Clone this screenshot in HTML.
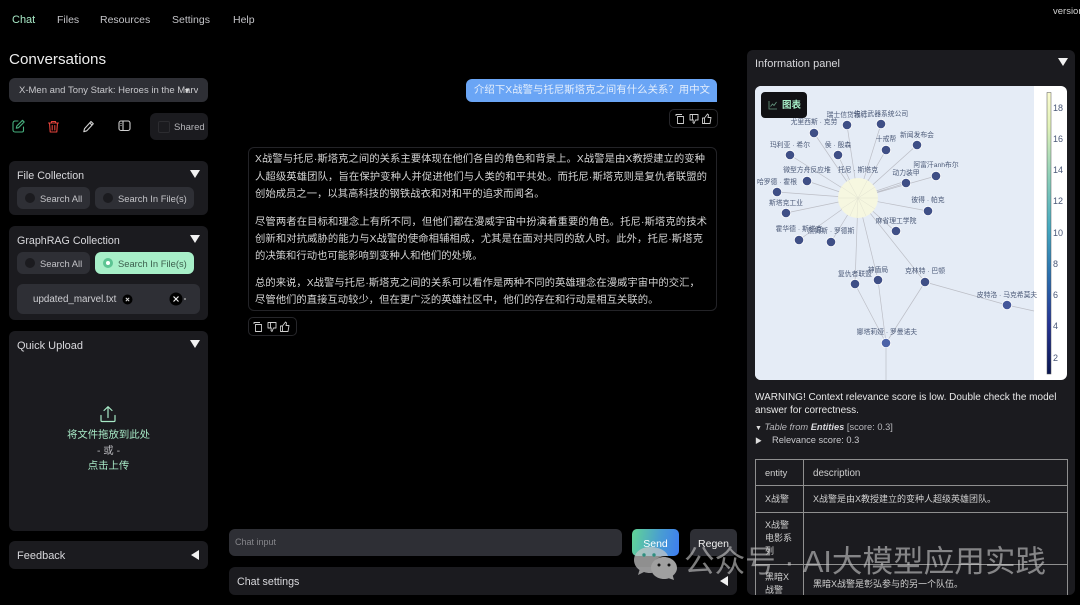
<!DOCTYPE html>
<html lang="zh"><head><meta charset="utf-8"><title>Chat</title>
<style>
html,body{margin:0;padding:0;background:#000;width:1080px;height:605px;overflow:hidden}
body{position:relative;font-family:"Liberation Sans","Noto Sans CJK SC",sans-serif;color:#d4d4d8;font-size:10.5px}
.a{position:absolute;white-space:nowrap}
.p{position:absolute;background:#1b1b1f;border-radius:6px}
.tab{position:absolute;top:13px;font-size:10.5px;line-height:14px;color:#c4c4c8}
.h{position:absolute;margin-top:1px;font-size:10.7px;line-height:14px;color:#d8d8dc;white-space:nowrap}
.tri{position:absolute;width:0;height:0;border-left:5px solid transparent;border-right:5px solid transparent;border-top:8px solid #f2f2f2}
.triL{position:absolute;width:0;height:0;border-top:5px solid transparent;border-bottom:5px solid transparent;border-right:8px solid #f2f2f2}
.radio{position:absolute;height:22px;background:#2e2f35;border-radius:6px;font-size:9.4px;line-height:22px;color:#c4c4c8;white-space:nowrap}
.radio i{position:absolute;left:8px;top:6px;width:10px;height:10px;border-radius:50%;background:#1b1b1f}
.radio span{position:absolute;left:23px;top:1px}
.l{position:absolute;left:255px;margin-top:2px;height:16px;line-height:16px;font-size:10.35px;color:#d4d4d4;text-align:justify;text-align-last:justify;white-space:nowrap}
.act{position:absolute;width:47px;height:17px;border:1px solid #26262a;border-radius:5px}
.act svg{position:absolute;left:0;top:0}
.t{position:absolute;color:#d0d0d0;font-size:9.3px;line-height:13px}
.hl{position:absolute;background:#8f8f8f;height:1px;left:755px;width:312px}
.wm{position:absolute;left:684px;top:545px;font-size:30.6px;line-height:34px;color:rgba(205,205,205,.6);white-space:nowrap}
</style></head><body>

<div class="tab" style="left:12px;color:#a7e9c6;font-size:11px">Chat</div>
<div class="tab" style="left:57px">Files</div>
<div class="tab" style="left:100px">Resources</div>
<div class="tab" style="left:172px">Settings</div>
<div class="tab" style="left:233px">Help</div>
<div class="a" style="left:1053px;top:5px;font-size:9.5px;line-height:13px;color:#d0d0d0">version</div>

<div class="a" style="left:9px;top:51px;font-size:15.2px;line-height:18px;color:#ececec">Conversations</div>
<div class="p" style="left:9px;top:78px;width:199px;height:24px;background:#2e2f35"></div>
<div class="a" style="left:19px;top:84px;width:179px;overflow:hidden;font-size:9.5px;line-height:13px;color:#c8c8cc">X-Men and Tony Stark: Heroes in the Marv</div>
<div class="a" style="left:185px;top:89px;width:0;height:0;border-left:2.5px solid transparent;border-right:2.5px solid transparent;border-top:4px solid #ddd"></div>

<svg class="a" style="left:12px;top:119px" width="13" height="14" viewBox="0 0 13 14" fill="none" stroke="#46b07e" stroke-width="1.1" stroke-linecap="round" stroke-linejoin="round"><path d="M6 2H3a2 2 0 0 0-2 2v7a2 2 0 0 0 2 2h7a1.500 1.500 0 0 0 1.500-1.500V8"/><path d="M10.500 1.300l1.700 1.700-5.700 5.700-2.200.5.500-2.200z"/></svg>
<svg class="a" style="left:47px;top:120px" width="13" height="13" viewBox="0 0 12 13" fill="none" stroke="#e5433c" stroke-width="1.1" stroke-linecap="round" stroke-linejoin="round"><path d="M1 3h10M4 3V1.500h4V3M2 3l.7 9h6.600L10 3M4.700 5.500v4.500M7.300 5.500v4.500"/></svg>
<svg class="a" style="left:82px;top:120px" width="13" height="13" viewBox="0 0 12 13" fill="none" stroke="#d0d0d0" stroke-width="1.100" stroke-linejoin="round"><path d="M8.500 1.500l2.300 2.300-6.500 7L1.300 11.700l.7-3z"/><path d="M7.300 2.900l2.300 2.300"/></svg>
<svg class="a" style="left:118px;top:120px" width="13" height="12" viewBox="0 0 13 12" fill="none" stroke="#d0d0d0" stroke-width="1.100"><rect x="1" y="1" width="11" height="9.500" rx="2"/><path d="M5 1v9.500M2.500 3.500h1M2.500 5.500h1"/></svg>
<div class="p" style="left:150px;top:113px;width:58px;height:27px"></div>
<div class="a" style="left:158px;top:121px;width:10px;height:10px;border:1px solid #2c2c30;border-radius:2px"></div>
<div class="a" style="left:174px;top:121px;font-size:9.5px;line-height:13px;color:#b4b4b8">Shared</div>

<div class="p" style="left:9px;top:161px;width:199px;height:54px"></div>
<div class="h" style="left:17px;top:168px">File Collection</div>
<div class="tri" style="left:190px;top:170px"></div>
<div class="radio" style="left:17px;top:187px;width:73px"><i></i><span>Search All</span></div>
<div class="radio" style="left:95px;top:187px;width:99px"><i></i><span>Search In File(s)</span></div>

<div class="p" style="left:9px;top:226px;width:199px;height:94px"></div>
<div class="h" style="left:17px;top:233px">GraphRAG Collection</div>
<div class="tri" style="left:190px;top:235px"></div>
<div class="radio" style="left:17px;top:252px;width:73px"><i></i><span>Search All</span></div>
<div class="radio" style="left:95px;top:252px;width:99px;background:#a7efc8;color:#3c5e4d"><i style="background:#fff;border:3px solid #5cc493;width:4px;height:4px"></i><span>Search In File(s)</span></div>
<div class="p" style="left:17px;top:284px;width:183px;height:30px;background:#2e2f35"></div>
<div class="a" style="left:33px;top:293px;font-size:9.8px;line-height:13px;color:#d0d0d4">updated_marvel.txt</div>
<svg class="a" style="left:122px;top:294px" width="11" height="11" viewBox="0 0 11 11"><circle cx="5.500" cy="5.500" r="5" fill="#000"/><path d="M3.800 3.800l3.400 3.400M7.200 3.800l-3.400 3.400" stroke="#ddd" stroke-width="1"/></svg>
<svg class="a" style="left:169px;top:292px" width="14" height="14" viewBox="0 0 14 14"><circle cx="7" cy="7" r="6.500" fill="#000"/><path d="M4.500 4.500l5 5M9.500 4.500l-5 5" stroke="#eee" stroke-width="1.200"/></svg>
<div class="a" style="left:184px;top:298px;width:2px;height:2px;background:#999;border-radius:50%"></div>

<div class="p" style="left:9px;top:331px;width:199px;height:200px"></div>
<div class="h" style="left:17px;top:338px;font-size:11px">Quick Upload</div>
<div class="tri" style="left:190px;top:340px"></div>
<svg class="a" style="left:99px;top:405px" width="18" height="18" viewBox="0 0 18 18" fill="none" stroke="#a7e9c6" stroke-width="1.200" stroke-linecap="round" stroke-linejoin="round"><path d="M9 12.500V2M5 5.500L9 1.700l4 3.800M2 10.500v5a1 1 0 0 0 1 1h12a1 1 0 0 0 1-1v-5"/></svg>
<div class="a" style="left:9px;top:428px;width:199px;text-align:center;font-size:10.4px;line-height:15.500px;color:#a7e9c6">将文件拖放到此处<br><span style="color:#b8b8bc">- 或 -</span><br>点击上传</div>

<div class="p" style="left:9px;top:541px;width:199px;height:28px"></div>
<div class="h" style="left:17px;top:548px;font-size:11px">Feedback</div>
<div class="triL" style="left:191px;top:550px"></div>

<!-- chat -->
<div class="a" style="left:466px;top:79px;width:251px;height:23px;background:#6aa5f5;border-radius:6px 6px 0 6px"></div>
<div class="l" style="left:474px;top:81px;width:236px;color:#e4eefc">介绍下X战警与托尼斯塔克之间有什么关系？用中文</div>
<div class="act" style="left:669px;top:109px"><svg width="47" height="17" viewBox="0 0 47 17" fill="none" stroke="#cfcfcf" stroke-width=".9" stroke-linejoin="round"><path d="M6 6V4.500h6M7.500 6.500h6v7h-6z"/><path d="M20 4.500h8v5.500h-2.500l-1.500 3.500-1-1 .3-2.500H20zM22.500 4.500v5"/><path d="M34.500 8v5.500h-2V8zM34.500 8l3-4 1 1-.5 2.500h3l-1 6h-5.500"/></svg></div>
<div class="a" style="left:248px;top:147px;width:467px;height:162px;border:1px solid #232327;border-radius:6px"></div>
<div class="l" style="top:150px;width:450px">X战警与托尼·斯塔克之间的关系主要体现在他们各自的角色和背景上。X战警是由X教授建立的变种</div>
<div class="l" style="top:168px;width:452px">人超级英雄团队，旨在保护变种人并促进他们与人类的和平共处。而托尼·斯塔克则是复仇者联盟的</div>
<div class="l" style="top:185px;width:288px">创始成员之一，以其高科技的钢铁战衣和对和平的追求而闻名。</div>
<div class="l" style="top:213px;width:452px">尽管两者在目标和理念上有所不同，但他们都在漫威宇宙中扮演着重要的角色。托尼·斯塔克的技术</div>
<div class="l" style="top:230px;width:448px">创新和对抗威胁的能力与X战警的使命相辅相成，尤其是在面对共同的敌人时。此外，托尼·斯塔克</div>
<div class="l" style="top:247px;width:225px">的决策和行动也可能影响到变种人和他们的处境。</div>
<div class="l" style="top:274px;width:441px">总的来说，X战警与托尼·斯塔克之间的关系可以看作是两种不同的英雄理念在漫威宇宙中的交汇，</div>
<div class="l" style="top:291px;width:403px">尽管他们的直接互动较少，但在更广泛的英雄社区中，他们的存在和行动是相互关联的。</div>
<div class="act" style="left:248px;top:317px"><svg width="47" height="17" viewBox="0 0 47 17" fill="none" stroke="#cfcfcf" stroke-width=".9" stroke-linejoin="round"><path d="M5 6V4.500h6M6.500 6.500h6v7h-6z"/><path d="M19 4.500h8v5.500h-2.500l-1.500 3.500-1-1 .3-2.500H19zM21.500 4.500v5"/><path d="M33.500 8v5.500h-2V8zM33.500 8l3-4 1 1-.5 2.500h3l-1 6h-5.500"/></svg></div>

<div class="p" style="left:229px;top:529px;width:393px;height:27px;background:#2e2f35"></div>
<div class="a" style="left:235px;top:536px;font-size:9px;line-height:12px;color:#85858a">Chat input</div>
<div class="a" style="left:632px;top:529px;width:47px;height:27px;border-radius:5px;background:linear-gradient(100deg,#5fd09a 5%,#4a9fd0 55%,#3f80ee 95%)"></div>
<div class="a" style="left:632px;top:537px;width:47px;text-align:center;font-size:10.500px;line-height:14px;color:#fff">Send</div>
<div class="a" style="left:690px;top:529px;width:47px;height:27px;border-radius:5px;background:#2e2f35"></div>
<div class="a" style="left:690px;top:537px;width:47px;text-align:center;font-size:10.500px;line-height:14px;color:#f0f0f0">Regen</div>
<div class="p" style="left:229px;top:567px;width:508px;height:28px"></div>
<div class="h" style="left:237px;top:574px">Chat settings</div>
<div class="triL" style="left:720px;top:576px"></div>

<!-- info panel -->
<div class="p" style="left:747px;top:50px;width:328px;height:545px"></div>
<div class="h" style="left:755px;top:56px;font-size:11px">Information panel</div>
<div class="tri" style="left:1058px;top:58px"></div>
<svg class="a" style="left:755px;top:86px" width="312" height="294" viewBox="755 86 312 294" font-family="Liberation Sans,Noto Sans CJK SC,sans-serif">
<defs><clipPath id="c"><rect x="755" y="86" width="312" height="294" rx="6"/></clipPath>
<linearGradient id="g" x1="0" y1="0" x2="0" y2="1"><stop offset="0" stop-color="#fbfbd0"/><stop offset=".12" stop-color="#e2f2b8"/><stop offset=".3" stop-color="#8ccfb8"/><stop offset=".48" stop-color="#45a9c0"/><stop offset=".65" stop-color="#2a6fae"/><stop offset=".82" stop-color="#253494"/><stop offset="1" stop-color="#0a1650"/></linearGradient></defs>
<g clip-path="url(#c)"><rect x="755" y="86" width="312" height="294" fill="#fff"/><rect x="755" y="86" width="279" height="294" fill="#e5ecf6"/>
<g stroke="#bcbec6" stroke-width=".7" fill="none">
<path d="M858 198L847 125M858 198L881 124M858 198L814 133M858 198L886 150M858 198L917 145M858 198L790 155M858 198L838 155M858 198L936 176M858 198L906 183M858 198L807 181M858 198L777 192M858 198L786 213M858 198L928 211M858 198L896 232M858 198L799 240M858 198L831 242M858 198L855 284M858 198L878 280M858 198L925 282M886 343L855 284M886 343L878 280M886 343L925 282M886 343V380M925 282L1007 305L1034 311M858 197L906 181"/></g>
<circle cx="858" cy="198" r="20" fill="#f6f7e0"/>
<g stroke="#e2e3d2" stroke-width=".5" fill="none"><path d="M858 198L847 178M858 198L868 179M858 198L840 186M858 198L875 187M858 198L838 198M858 198L878 198M858 198L841 209M858 198L875 209M858 198L850 216M858 198L866 216M858 198L857 218"/></g>
<g fill="#3f4f86" stroke="#fff" stroke-width=".8">
<circle cx="847" cy="125" r="4.700"/><circle cx="881" cy="124" r="4.700"/><circle cx="814" cy="133" r="4.700"/><circle cx="886" cy="150" r="4.700"/><circle cx="917" cy="145" r="4.700"/><circle cx="790" cy="155" r="4.700"/><circle cx="838" cy="155" r="4.700"/><circle cx="936" cy="176" r="4.700"/><circle cx="906" cy="183" r="4.700"/><circle cx="807" cy="181" r="4.700"/><circle cx="777" cy="192" r="4.700"/><circle cx="786" cy="213" r="4.700"/><circle cx="928" cy="211" r="4.700"/><circle cx="896" cy="231" r="4.700"/><circle cx="799" cy="240" r="4.700"/><circle cx="831" cy="242" r="4.700"/><circle cx="855" cy="284" r="4.700"/><circle cx="878" cy="280" r="4.700"/><circle cx="925" cy="282" r="4.700"/><circle cx="1007" cy="305" r="4.700" fill="#44579a"/><circle cx="886" cy="343" r="4.700" fill="#4c63a8"/></g>
<g font-size="6.800" fill="#4c5a78" text-anchor="middle">
<text x="847" y="117">瑞士信贷银行</text><text x="881" y="116">先进武器系统公司</text><text x="814" y="124">尤里西斯 · 克劳</text><text x="886" y="141">十戒帮</text><text x="917" y="137">新闻发布会</text><text x="790" y="147">玛利亚 · 希尔</text><text x="838" y="147">侯 · 殷森</text><text x="936" y="167">阿富汗anh布尔</text><text x="906" y="175">动力装甲</text><text x="807" y="172">微型方舟反应堆</text><text x="777" y="184">哈罗德 · 霍根</text><text x="786" y="205">斯塔克工业</text><text x="928" y="202">彼得 · 帕克</text><text x="896" y="223">麻省理工学院</text><text x="799" y="231">霍华德 · 斯塔克</text><text x="831" y="233">詹姆斯 · 罗德斯</text><text x="855" y="276">复仇者联盟</text><text x="878" y="272">神盾局</text><text x="925" y="273">克林特 · 巴顿</text><text x="1007" y="297">皮特洛 · 马克希莫夫</text><text x="887" y="334">娜塔莉娅 · 罗曼诺夫</text><text x="858" y="172">托尼 · 斯塔克</text></g>
<rect x="1047" y="92.500" width="4" height="281.500" fill="url(#g)" stroke="#555" stroke-width=".5"/>
<g font-size="9" fill="#4a5878"><text x="1053" y="111">18</text><text x="1053" y="142">16</text><text x="1053" y="173">14</text><text x="1053" y="204">12</text><text x="1053" y="236">10</text><text x="1053" y="267">8</text><text x="1053" y="298">6</text><text x="1053" y="329">4</text><text x="1053" y="361">2</text></g>
</g></svg>
<div class="a" style="left:761px;top:92px;width:46px;height:26px;background:#111114;border-radius:4px"></div>
<svg class="a" style="left:768px;top:100px" width="10" height="10" viewBox="0 0 10 10" fill="none" stroke="#6a9c84" stroke-width=".8"><path d="M1 1v8h8M2.500 6.500l2-2.500 1.500 1.500L8.500 2"/></svg>
<div class="a" style="left:782px;top:99px;font-size:9.500px;line-height:13px;color:#a7efc8;font-weight:bold">图表</div>

<div class="a" style="left:755px;top:392px;font-size:10px;line-height:12.500px;color:#e8e8e8;white-space:normal;width:312px">WARNING! Context relevance score is low. Double check the model answer for correctness.</div>
<div class="a" style="left:755px;top:421px;font-size:9.300px;line-height:12px;color:#b8b8bc"><span style="font-size:7px;color:#ddd">▼</span> <i>Table from <b style="color:#d8d8dc">Entities</b></i> [score: 0.3]</div>
<div class="a" style="left:755px;top:434px;font-size:9.300px;line-height:12px;color:#c8c8cc"><span style="font-size:7px;color:#ddd">▶</span><span style="position:absolute;left:17px">Relevance score: 0.3</span></div>

<div class="hl" style="top:459px"></div><div class="hl" style="top:485px"></div><div class="hl" style="top:512px"></div><div class="hl" style="top:564px"></div>
<div class="a" style="left:755px;top:459px;width:1px;height:136px;background:#8f8f8f"></div>
<div class="a" style="left:803px;top:459px;width:1px;height:136px;background:#8f8f8f"></div>
<div class="a" style="left:1067px;top:459px;width:1px;height:136px;background:#8f8f8f"></div>
<div class="t" style="left:765px;top:467px">entity</div>
<div class="t" style="left:813px;top:467px;font-size:9.8px">description</div>
<div class="t" style="left:765px;top:493px;font-size:9px">X战警</div>
<div class="t" style="left:813px;top:493px;font-size:9px">X战警是由X教授建立的变种人超级英雄团队。</div>
<div class="t" style="left:765px;top:519px;line-height:13px;width:32px;font-size:9px">X战警<br>电影系<br>列</div>
<div class="t" style="left:765px;top:571px;line-height:13px;width:32px;font-size:9px">黑暗X<br>战警</div>
<div class="t" style="left:813px;top:578px;font-size:9px">黑暗X战警是彰弘参与的另一个队伍。</div>
<div class="a" style="left:747px;top:595px;width:333px;height:10px;background:#000"></div>

<!-- watermark -->
<svg class="a" style="left:633px;top:546px" width="44" height="34" viewBox="0 0 44 34"><path d="M17 1C8 1 1 6.500 1 14c0 4 2 7.500 5.500 10L5 29l6-3c2 .7 4 1 6 1 1 0 1.500 0 2.300-.1-.5-1.300-.8-2.600-.8-4C18.500 15.500 25 10 33.500 10c.5 0 1 0 1.500.1C33.500 4.800 26 1 17 1z" fill="#c6c6c6" fill-opacity=".72"/><path d="M31 11c-7 0-13 4.800-13 11s6 11 13 11c1.700 0 3.300-.3 4.800-.8L41 34l-1.200-4.300c2.500-2 4.200-4.700 4.200-7.700 0-6.200-6-11-13-11z" fill="#a0a0a0"/><circle cx="11" cy="9" r="1.700" fill="#2f8f80"/><circle cx="21" cy="9" r="1.700" fill="#2f8f80"/><circle cx="26" cy="19" r="1.500" fill="#111"/><circle cx="36" cy="19" r="1.500" fill="#111"/></svg>
<div class="wm">公众号 · AI大模型应用实践</div>
</body></html>
